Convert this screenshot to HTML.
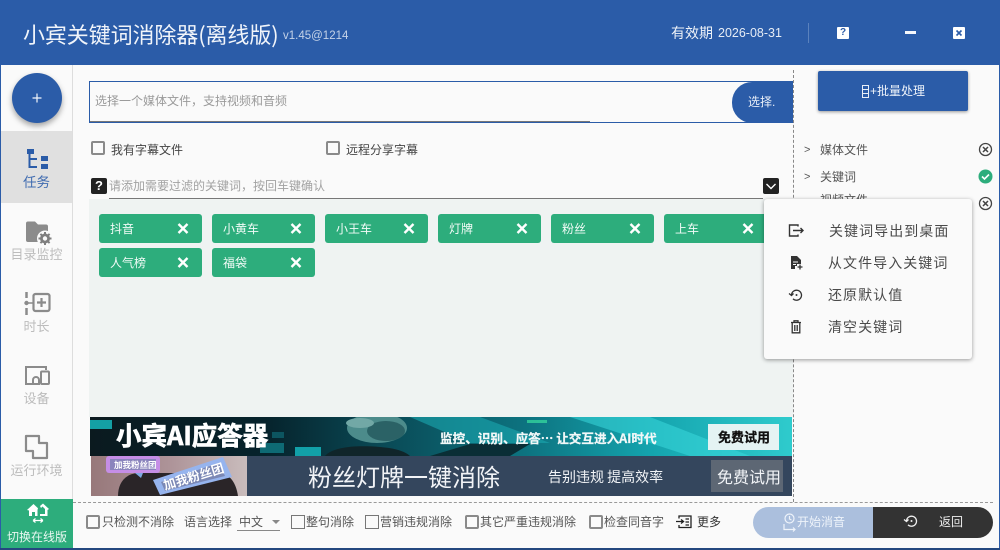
<!DOCTYPE html>
<html lang="zh"><head><meta charset="utf-8"><title>小宾关键词消除器</title>
<style>
*{box-sizing:border-box;margin:0;padding:0}
html,body{width:1000px;height:550px;overflow:hidden;background:#fafafa}
body{position:relative;font-family:"Liberation Sans","Noto Sans CJK SC",sans-serif;font-size:12px;color:#444}
.a{position:absolute;white-space:nowrap;line-height:1}
svg{position:absolute;display:block}
.tag{position:absolute;width:103px;height:29px;background:#2dad7c;border-radius:3px;color:#f2fbf7;font-size:12px;line-height:31px;padding-left:11px}
.tag svg{left:78px;top:9px}
.cb{position:absolute;width:14px;height:14px;border:2px solid #8a8a8a;border-radius:2px;background:#fafafa}
.cbt{position:absolute;width:14px;height:14px;border:1px solid #777;background:#fafafa}
.nav{color:#bcbcbc;font-size:13px;text-align:center;width:71px;left:1px}
.m{font-size:14px;color:#4a4a4a;letter-spacing:1.05px}
.b{font-size:12px;color:#555}
</style></head><body>
<div class="a" style="left:0;top:0;width:1000px;height:65px;background:#2b5ca8"></div>
<div class="a" style="left:0;top:0;width:1px;height:550px;background:#2b5ca8"></div>
<div class="a" style="left:999px;top:0;width:1px;height:550px;background:#2b5ca8"></div>
<div class="a" style="left:0;top:548px;width:1000px;height:2px;background:#24487f"></div>
<div class="a" style="left:23px;top:21px;font-size:22px;letter-spacing:-.1px;color:#f0f4fa;font-family:'Noto Sans CJK SC',sans-serif;line-height:26px">小宾关键词消除器(离线版)</div>
<div class="a" style="left:283px;top:31px;font-size:11.500px;color:#c5d3e8">v1.45@1214</div>
<div class="a" style="left:671px;top:26px;font-size:14px;color:#eef2f8">有效期</div>
<div class="a" style="left:718px;top:27px;font-size:12.500px;color:#e6ecf5">2026-08-31</div>
<div class="a" style="left:808px;top:23px;width:1px;height:20px;background:#5b82bd"></div>
<div class="a" style="left:837px;top:27px;width:12px;height:12px;background:#fff;border-radius:1px;color:#2b5ca8;font-size:10px;font-weight:bold;text-align:center;line-height:12px">?</div>
<div class="a" style="left:905px;top:31px;width:11px;height:3px;background:#f5f7fb"></div>
<svg style="left:953px;top:27px" width="12" height="12" viewBox="0 0 12 12"><rect width="12" height="12" rx="1" fill="#fff"/><path d="M3.500 3.500l5 5M8.500 3.500l-5 5" stroke="#2b5ca8" stroke-width="1.600"/></svg>

<!-- sidebar -->
<div class="a" style="left:72px;top:65px;width:1px;height:434px;background:#ddd"></div>
<div class="a" style="left:12px;top:73px;width:50px;height:50px;border-radius:50%;background:#2b5ca8;box-shadow:0 3px 6px rgba(0,0,0,.35)"></div>
<svg style="left:31px;top:92px" width="12" height="12"><path d="M6 1.500v9M1.500 6h9" stroke="#f2f5fa" stroke-width="1.200"/></svg>
<div class="a" style="left:1px;top:131px;width:71px;height:72px;background:#e0e0e0"></div>
<svg style="left:26px;top:148px" width="23" height="23" viewBox="0 0 23 23" fill="#2b5ca8"><rect x="1" y="1" width="7" height="5"/><rect x="2.500" y="6" width="2" height="14"/><rect x="4" y="10" width="7" height="2"/><rect x="4" y="18" width="7" height="2"/><rect x="15" y="8" width="7" height="5"/><rect x="15" y="16" width="7" height="5"/></svg>
<div class="a nav" style="top:176px;color:#3f6bb0;font-size:13.500px">任务</div>
<svg style="left:25px;top:220px" width="28" height="26" viewBox="0 0 28 26"><path d="M1 3.500A2 2 0 0 1 3 1.500h7l3 3h8a2 2 0 0 1 2 2V20a2 2 0 0 1-2 2H3a2 2 0 0 1-2-2z" fill="#8b8b8b"/><circle cx="20" cy="18.500" r="8" fill="#fafafa"/><circle cx="20" cy="18.500" r="3.600" fill="none" stroke="#7f7f7f" stroke-width="2.800"/><path d="M20 12v13M13.500 18.500h13M15.400 13.900l9.200 9.200M24.600 13.900l-9.200 9.200" stroke="#7f7f7f" stroke-width="2" stroke-dasharray="2 9 2"/></svg>
<div class="a nav" style="top:248px">目录监控</div>
<svg style="left:24px;top:291px" width="28" height="25" viewBox="0 0 28 25" fill="none" stroke="#8b8b8b"><path d="M2.500 1v6M2.500 17v7" stroke-width="2.500"/><circle cx="2.500" cy="12" r="2.200" fill="#8b8b8b" stroke="none"/><path d="M4 12h6" stroke-width="1.500"/><rect x="9.500" y="3" width="16" height="17" rx="2" stroke-width="2.200"/><path d="M17.500 7v9M13 11.500h9" stroke-width="2.200"/></svg>
<div class="a nav" style="top:320px">时长</div>
<svg style="left:24px;top:365px" width="27" height="22" viewBox="0 0 27 22" fill="none" stroke="#8b8b8b" stroke-width="2"><path d="M8 19H2V2h20v3"/><rect x="17" y="6.500" width="8" height="12.500" rx="1"/><path d="M9 19v-4a3 3 0 0 1 6 0v4z"/></svg>
<div class="a nav" style="top:392px">设备</div>
<svg style="left:24px;top:434px" width="26" height="26" viewBox="0 0 26 26" fill="none" stroke="#8b8b8b" stroke-width="2.200"><path d="M2 2h13v7h8v15H9v-7H2z" stroke-linejoin="round"/></svg>
<div class="a nav" style="top:464px">运行环境</div>
<div class="a" style="left:1px;top:499px;width:72px;height:49px;background:#2dad7c"></div>
<svg style="left:26px;top:502px" width="24" height="22" viewBox="0 0 24 22"><path d="M1 8l6.500-6L12 6.200 11.500 8v6H9v-4H6v4H3V8.500z" fill="#fff"/><path d="M14 4l3-2.500L23 7l-1.500 1v6H14v-2h5V7l-2.500-2.500L15 6z" fill="#fff"/><path d="M7 18.500h10M7 18.500l2.500-2M7 18.500l2.500 2M17 18.500l-2.500-2M17 18.500l-2.500 2" stroke="#fff" stroke-width="1.200" fill="none"/></svg>
<div class="a" style="left:1px;top:531px;width:72px;text-align:center;font-size:12px;color:#e8f7f1">切换在线版</div>

<!-- input -->
<div class="a" style="left:89px;top:81px;width:705px;height:42px;border:1px solid #2b5ca8;border-right:0"></div>
<div class="a" style="left:90px;top:121px;width:500px;height:1px;background:#777"></div>
<div class="a" style="left:95px;top:95px;font-size:12px;color:#9a9a9a">选择一个媒体文件，支持视频和音频</div>
<div class="a" style="left:732px;top:82px;width:61px;height:41px;background:#2b5ca8;border-radius:20px 0 0 20px"></div>
<div class="a" style="left:748px;top:96px;font-size:12px;color:#e8eef7">选择.</div>
<div class="a" style="left:793px;top:70px;height:432px;border-left:1px dashed #888"></div>
<div class="a" style="left:818px;top:71px;width:150px;height:40px;background:#2b5ca8;border-radius:2px;box-shadow:0 1px 3px rgba(0,0,0,.4)"></div>
<svg style="left:862px;top:85px" width="8" height="13" viewBox="0 0 8 13" fill="none" stroke="#e8eef7"><rect x=".5" y=".5" width="6" height="12"/><path d="M1 4.500h5M1 8.500h5"/></svg>
<div class="a" style="left:870px;top:85px;font-size:12px;color:#eef3fa">+批量处理</div>

<div class="cb" style="left:91px;top:141px"></div>
<div class="a" style="left:111px;top:144px;font-size:12px;color:#444">我有字幕文件</div>
<div class="cb" style="left:326px;top:141px"></div>
<div class="a" style="left:346px;top:144px;font-size:12px;color:#444">远程分享字幕</div>

<div class="a" style="left:91px;top:178px;width:16px;height:16px;background:#222;border-radius:2px;color:#fff;font-size:13px;font-weight:bold;text-align:center;line-height:16px">?</div>
<div class="a" style="left:109px;top:180px;font-size:12px;color:#a2a2a2">请添加需要过滤的关键词，按回车键确认</div>
<div class="a" style="left:109px;top:198px;width:654px;height:1px;background:#777"></div>
<div class="a" style="left:763px;top:178px;width:16px;height:16px;background:#222;border-radius:2px"></div>
<svg style="left:763px;top:178px" width="16" height="16"><path d="M3.500 6l4.500 4.500L12.500 6" stroke="#fff" stroke-width="1.400" fill="none"/></svg>

<div class="a" style="left:89px;top:199px;width:704px;height:218px;background:#eff3f2"></div>
<div class="tag" style="left:99px;top:214px">抖音<svg width="12" height="11"><path d="M1.500 1l9 9M10.500 1l-9 9" stroke="#fff" stroke-width="2.400"/></svg></div>
<div class="tag" style="left:212px;top:214px">小黄车<svg width="12" height="11"><path d="M1.500 1l9 9M10.500 1l-9 9" stroke="#fff" stroke-width="2.400"/></svg></div>
<div class="tag" style="left:325px;top:214px">小王车<svg width="12" height="11"><path d="M1.500 1l9 9M10.500 1l-9 9" stroke="#fff" stroke-width="2.400"/></svg></div>
<div class="tag" style="left:438px;top:214px">灯牌<svg width="12" height="11"><path d="M1.500 1l9 9M10.500 1l-9 9" stroke="#fff" stroke-width="2.400"/></svg></div>
<div class="tag" style="left:551px;top:214px">粉丝<svg width="12" height="11"><path d="M1.500 1l9 9M10.500 1l-9 9" stroke="#fff" stroke-width="2.400"/></svg></div>
<div class="tag" style="left:664px;top:214px">上车<svg width="12" height="11"><path d="M1.500 1l9 9M10.500 1l-9 9" stroke="#fff" stroke-width="2.400"/></svg></div>
<div class="tag" style="left:99px;top:248px">人气榜<svg width="12" height="11"><path d="M1.500 1l9 9M10.500 1l-9 9" stroke="#fff" stroke-width="2.400"/></svg></div>
<div class="tag" style="left:212px;top:248px">福袋<svg width="12" height="11"><path d="M1.500 1l9 9M10.500 1l-9 9" stroke="#fff" stroke-width="2.400"/></svg></div>

<!-- banners -->
<svg style="left:90px;top:417px" width="702" height="39" viewBox="0 0 702 39">
<defs><linearGradient id="g1" x1="0" x2="1" y1="0" y2="0"><stop offset="0" stop-color="#0b1a1f"/><stop offset=".25" stop-color="#06232c"/><stop offset=".42" stop-color="#0a4a56"/><stop offset=".62" stop-color="#0d7380"/><stop offset=".8" stop-color="#14a4ae"/><stop offset="1" stop-color="#2fcbcd"/></linearGradient></defs>
<rect width="702" height="39" fill="url(#g1)"/>
<rect x="0" y="3" width="22" height="9" fill="#14a0a4"/><rect x="170" y="26" width="24" height="10" fill="#0e6a74"/><rect x="205" y="30" width="26" height="9" fill="#12a0a8"/><rect x="182" y="15" width="12" height="6" fill="#0c5560"/>
<path d="M235 39c8-9 30-11 55-9 14 1 25 4 30 9z" fill="#10252a"/>
<path d="M340 39l40-12h60l-20 12z" fill="#0a2e36"/>
<ellipse cx="287" cy="11" rx="30" ry="15" fill="#4c8b8b"/><ellipse cx="296" cy="14" rx="19" ry="10" fill="#2b6266"/><ellipse cx="270" cy="6" rx="14" ry="5" fill="#72a8a6"/>
<path d="M320 0l60 26 80 0-70-26z" fill="#1aa9b0" opacity=".6"/><path d="M480 0l120 39h60L560 0z" fill="#3bd8dc" opacity=".55"/>
<rect x="437" y="3" width="20" height="3" fill="#39e0a0" opacity=".7"/>
<rect x="618" y="7" width="71" height="26" fill="#e4f3f3"/>
<text x="26" y="28" font-family="'Noto Sans CJK SC',sans-serif" font-size="25.500" font-weight="700" fill="#fff" stroke="#fff" stroke-width=".7">小宾AI应答器</text>
<text x="350" y="26" font-family="'Noto Sans CJK SC',sans-serif" font-size="12.600" font-weight="700" fill="#f2f8f8" stroke="#f2f8f8" stroke-width=".25">监控、识别、应答… 让交互进入AI时代</text>
<text x="628" y="25" font-family="'Noto Sans CJK SC',sans-serif" font-size="13" font-weight="700" fill="#111" stroke="#111" stroke-width=".3">免费试用</text>
</svg>
<svg style="left:91px;top:456px" width="701" height="40" viewBox="0 0 701 40">
<defs><linearGradient id="g2" x1="0" x2="1" y1="0" y2="0"><stop offset="0" stop-color="#97787a"/><stop offset=".5" stop-color="#ad9398"/><stop offset="1" stop-color="#c9bcbc"/></linearGradient></defs>
<rect width="156" height="40" fill="url(#g2)"/><path d="M27 40c0-12 6-22 20-23h80c12 0 18 10 20 23z" fill="#2a2528"/>
<rect x="15" y="0" width="54" height="17" rx="3" fill="#c58ee6"/><rect x="19" y="3" width="46" height="11" fill="#8a84bd"/><path d="M44 17l6 5 2-5z" fill="#7ea8e0"/>
<path d="M62 24L132 1l9 20-72 18z" fill="#96b4ee"/><path d="M70 26l58-19 6 13-60 15z" fill="#7b88b5"/>
<text x="23" y="12" font-family="'Noto Sans CJK SC',sans-serif" font-size="8.500" font-weight="700" fill="#fff">加我粉丝团</text>
<text x="74" y="34" transform="rotate(-17 74 34)" font-family="'Noto Sans CJK SC',sans-serif" font-size="12.500" font-weight="700" fill="#fff">加我粉丝团</text>
<rect x="156" width="545" height="40" fill="#34465d"/>
<text x="217" y="30" font-family="'Noto Sans CJK SC',sans-serif" font-size="24" fill="#f2f4f7">粉丝灯牌一键消除</text>
<text x="457" y="26" font-family="'Noto Sans CJK SC',sans-serif" font-size="14" fill="#f2f4f7">告别违规 提高效率</text>
<rect x="620" y="4" width="72" height="32" fill="#5d6774"/>
<text x="626" y="27" font-family="'Noto Sans CJK SC',sans-serif" font-size="16" fill="#f2f4f7">免费试用</text>
</svg>

<!-- right panel -->
<div class="a" style="left:804px;top:145px;font-size:11px;color:#555">&gt;</div>
<div class="a" style="left:820px;top:144px;font-size:12px;color:#555">媒体文件</div>
<div class="a" style="left:804px;top:172px;font-size:11px;color:#555">&gt;</div>
<div class="a" style="left:820px;top:171px;font-size:12px;color:#555">关键词</div>
<div class="a" style="left:820px;top:194px;font-size:12px;color:#555">视频文件</div>
<svg style="left:978px;top:142px" width="15" height="15"><circle cx="7.500" cy="7.500" r="6" fill="none" stroke="#444" stroke-width="1.300"/><path d="M5 5l5 5M10 5l-5 5" stroke="#444" stroke-width="1.500"/></svg>
<svg style="left:978px;top:169px" width="15" height="15"><circle cx="7.500" cy="7.500" r="7" fill="#2dad7c"/><path d="M4 7.500l2.500 2.500L11 5.500" stroke="#fff" stroke-width="1.600" fill="none"/></svg>
<svg style="left:978px;top:196px" width="15" height="15"><circle cx="7.500" cy="7.500" r="6" fill="none" stroke="#444" stroke-width="1.300"/><path d="M5 5l5 5M10 5l-5 5" stroke="#444" stroke-width="1.500"/></svg>

<!-- menu -->
<div class="a" style="left:764px;top:199px;width:208px;height:160px;background:#fafafa;border-radius:3px;box-shadow:0 1px 4px rgba(0,0,0,.4)"></div>
<svg style="left:788px;top:224px" width="17" height="14" fill="none" stroke="#333" stroke-width="1.400"><path d="M10 2.500V1H1.500v11H10v-1.500"/><path d="M5 6.500h10M12.500 4l2.500 2.500L12.500 9" /></svg>
<div class="a m" style="left:829px;top:224px">关键词导出到桌面</div>
<svg style="left:790px;top:256px" width="14" height="14"><path d="M1 0h6l4 4v4H7v2H5v3H1z" fill="#333"/><path d="M3 6h5M3 8.500h3" stroke="#fafafa"/><path d="M10 8.500v5M7.500 11h5" stroke="#333" stroke-width="1.300"/></svg>
<div class="a m" style="left:828px;top:256px">从文件导入关键词</div>
<svg style="left:788px;top:288px" width="15" height="14" fill="none" stroke="#333" stroke-width="1.300"><path d="M3.500 7a5 5 0 1 1 1.500 3.800"/><path d="M1 5.500l2.500 2 2-2"/><circle cx="8.500" cy="7" r="1" fill="#333" stroke="none"/></svg>
<div class="a m" style="left:828px;top:288px">还原默认值</div>
<svg style="left:790px;top:320px" width="13" height="14" fill="none" stroke="#333" stroke-width="1.300"><path d="M1 2.500h10M4 2V.8h4V2"/><path d="M2.200 3v9.800h7.600V3"/><path d="M4.800 5v6M7.200 5v6"/></svg>
<div class="a m" style="left:828px;top:320px">清空关键词</div>

<!-- bottom -->
<div class="a" style="left:73px;top:502px;width:920px;border-top:1px dashed #999"></div>
<div class="cb" style="left:86px;top:515px;width:14px;height:14px"></div>
<div class="a b" style="left:102px;top:516px">只检测不消除</div>
<div class="a b" style="left:184px;top:516px">语言选择</div>
<div class="a b" style="left:239px;top:516px">中文</div>
<svg style="left:272px;top:520px" width="8" height="5"><path d="M0 0h8L4 4z" fill="#888"/></svg>
<div class="a" style="left:237px;top:530px;width:43px;height:1px;background:#888"></div>
<div class="cbt" style="left:291px;top:515px"></div>
<div class="a b" style="left:306px;top:516px">整句消除</div>
<div class="cbt" style="left:365px;top:515px"></div>
<div class="a b" style="left:380px;top:516px">营销违规消除</div>
<div class="cb" style="left:465px;top:515px"></div>
<div class="a b" style="left:480px;top:516px">其它严重违规消除</div>
<div class="cb" style="left:589px;top:515px"></div>
<div class="a b" style="left:604px;top:516px">检查同音字</div>
<svg style="left:676px;top:515px" width="16" height="14" fill="none" stroke="#222" stroke-width="1.300"><path d="M3 3.500V1h12v11.500H3V10"/><path d="M0 6.500h7M5 4.500l2.500 2L5 8.500M9.500 4h3.500M9.500 7h3.500M9.500 10h3.500"/></svg>
<div class="a b" style="left:697px;top:516px;color:#333">更多</div>
<div class="a" style="left:753px;top:507px;width:120px;height:31px;background:#abbfdd;border-radius:16px 0 0 16px"></div>
<svg style="left:783px;top:513px" width="13" height="19" fill="none" stroke="#eef3fa" stroke-width="1.200"><circle cx="6.500" cy="5.500" r="4.500"/><path d="M6.500 3v3l2 1M1 11v5.500h11M10 14.500l2 2-2 2"/></svg>
<div class="a" style="left:797px;top:516px;font-size:12px;color:#eef3fa">开始消音</div>
<div class="a" style="left:873px;top:507px;width:120px;height:31px;background:#333;border-radius:0 16px 16px 0"></div>
<svg style="left:903px;top:514px" width="15" height="14" fill="none" stroke="#f0f0f0" stroke-width="1.300"><path d="M3.500 7a5 5 0 1 1 1.500 3.800"/><path d="M1 5.500l2.500 2 2-2"/><circle cx="8.500" cy="7" r="1" fill="#f0f0f0" stroke="none"/></svg>
<div class="a" style="left:939px;top:516px;font-size:12px;color:#eee">返回</div>
</body></html>
